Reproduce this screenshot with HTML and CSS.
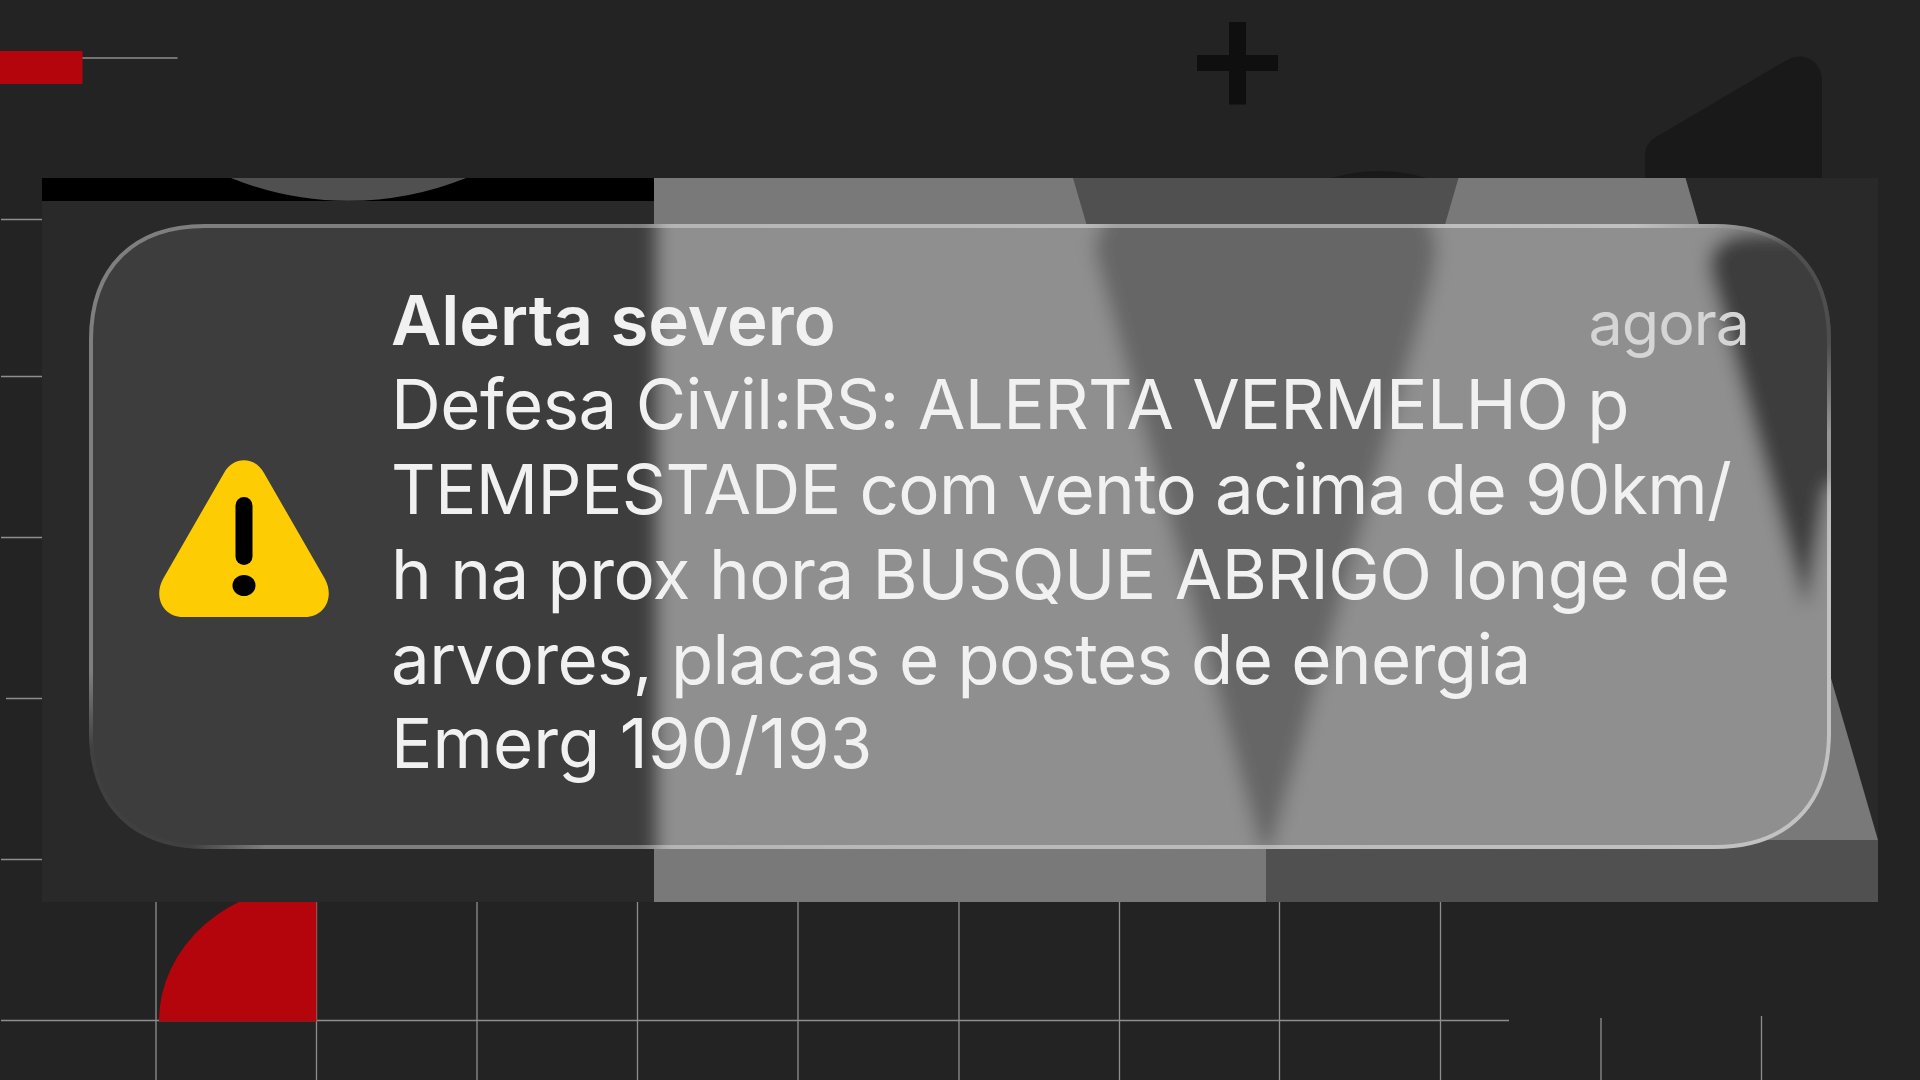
FILE: index.html
```html
<!DOCTYPE html>
<html lang="pt-BR">
<head>
    <meta charset="UTF-8">
    <meta name="viewport" content="width=device-width, initial-scale=1.0">
    <title>Alerta severo</title>
    <link rel="stylesheet" href="styles.css">
</head>
<body>
<main class="tela">
    <svg class="fundo" viewBox="0 0 1920 1080" aria-hidden="true">
        <!-- grade -->
        <g class="linhas">
            <path d="M82 58H177.500M1 219.500H60M1 376.500H60M1 537.500H60M6 698.500H60M1 859.500H60M1 1020.500H1509"/>
            <path d="M156 880V1080M316.500 880V1080M477 880V1080M637.500 880V1080M798 880V1080M959 880V1080M1119.500 880V1080M1279.500 880V1080M1440.500 880V1080M1601 1018V1080M1761.500 1016V1080"/>
        </g>
        <rect class="vermelho" x="0" y="51" width="82.500" height="33"/>
        <path class="vermelho" d="M159 1021.500A157.500 137 0 0 1 316.500 884V1021.500Z"/>

        <!-- formas escuras -->
        <path class="mais" d="M1229 22H1246V55H1278V71H1246V104.500H1229V71H1197V55H1229Z"/>
        <circle class="forma" cx="1379" cy="339" r="168"/>
        <path class="forma" d="M1645 200V155Q1645 143 1656 137L1787 60C1804 50 1822 62 1822 80V200Z"/>

        <!-- painel -->
        <rect class="painel-base" x="42" y="178" width="1836" height="724"/>
        <rect x="42" y="178" width="612" height="23"/>
        <path class="medio" d="M231 178H466A314 314 0 0 1 231 178Z"/>
        <path class="claro" d="M654 178H1685.500L1878 840V902H654Z"/>
        <path class="medio" d="M1073 178H1458.500L1266 840H1878V902H1266V840Z"/>
    </svg>

    <section class="painel">
        <article class="alerta">
            <svg class="vidro" viewBox="0 0 1742 625" aria-hidden="true">
                <defs>
                    <path id="contorno" d="M2 116C2 44 44 2 116 2H1626C1698 2 1740 44 1740 116V509C1740 581 1698 623 1626 623H116C44 623 2 581 2 509Z"/>
                    <clipPath id="corte"><path d="M0 116C0 43 43 0 116 0H1626C1699 0 1742 43 1742 116V509C1742 582 1699 625 1626 625H116C43 625 0 582 0 509Z"/></clipPath>
                    <filter id="desfoque" filterUnits="userSpaceOnUse" x="-60" y="-60" width="1862" height="745"><feGaussianBlur stdDeviation="9"/></filter>
                    <radialGradient id="apaga"><stop offset="0.500" stop-color="#000"/><stop offset="1" stop-color="#000" stop-opacity="0"/></radialGradient>
                    <linearGradient id="borda" x1="0" x2="1"><stop offset="0.300" stop-color="#fff" stop-opacity="0.340"/><stop offset="1" stop-color="#fff" stop-opacity="0.460"/></linearGradient>
                    <mask id="brilho" maskUnits="userSpaceOnUse" x="0" y="0" width="1742" height="625">
                        <rect width="1742" height="625" fill="#fff"/>
                        <circle cx="30" cy="595" r="150" fill="url(#apaga)" opacity="0.950"/>
                        <circle cx="1712" cy="40" r="170" fill="url(#apaga)" opacity="0.800"/>
                    </mask>
                </defs>
                <g clip-path="url(#corte)">
                    <rect class="vidro-escuro" width="1742" height="625"/>
                    <g filter="url(#desfoque)">
                        <rect class="vidro-claro" x="567" y="-50" width="1300" height="750"/>
                        <path class="vidro-medio" d="M1022 -20H1332L1346 10Q1350 28 1342 60L1182 625H1172L1010 44Q1003 24 1008 12Z"/>
                        <path class="vidro-escuro" d="M1622 52Q1612 14 1660 8H1800V250L1738 262L1717 385Z"/>
                    </g>
                </g>
                <use href="#contorno" class="borda" mask="url(#brilho)"/>
            </svg>

            <svg class="icone" viewBox="0 0 170 158" aria-hidden="true">
                <path fill="#fdcc03" d="M65 13C74 -4 96 -4 105 13L166 119C176 138 165 157 146 157H24C5 157 -6 138 4 119Z"/>
                <rect x="76.500" y="37" width="17" height="68" rx="8.500"/>
                <ellipse cx="85" cy="125.500" rx="11.500" ry="10.500"/>
            </svg>

            <div class="conteudo">
                <header class="topo">
                    <h1>Alerta severo</h1>
                    <time>agora</time>
                </header>
                <p class="mensagem">
                    <span class="l1">Defesa Civil:RS: ALERTA VERMELHO p</span>
                    <span class="l2">TEMPESTADE com vento acima de 90km/</span>
                    <span class="l3">h na prox hora BUSQUE ABRIGO longe de</span>
                    <span class="l4">arvores, placas e postes de energia</span>
                    <span class="l5">Emerg 190/193</span>
                </p>
            </div>
        </article>
    </section>
</main>
</body>
</html>
```
FILE: styles.css
```css
* {
    box-sizing: border-box;
    margin: 0;
    padding: 0;
}

body {
    background: #232323;
    font-family: Inter, "Liberation Sans", sans-serif;
    overflow: hidden;
}

.tela {
    position: relative;
    width: 1920px;
    height: 1080px;
    padding: 178px 42px;
}

/* Arte de fundo */
.fundo {
    position: absolute;
    top: 0;
    left: 0;
    width: 1920px;
    height: 1080px;
}

.linhas {
    fill: none;
    stroke: #8e8e8e;
    stroke-width: 1.3;
}

.vermelho { fill: #b4050d; }
.mais { fill: #0f0f0f; }
.forma { fill: #191919; }
.painel-base { fill: #292929; }
.claro { fill: #797979; }
.medio { fill: #505050; }

.painel {
    position: relative;
    height: 724px;
    padding: 45.5px 47px;
}

/* Cartão de vidro */
.alerta {
    position: relative;
    display: flex;
    height: 625px;
    padding: 54px 84px 0 70px;
}

.vidro {
    position: absolute;
    inset: 0;
    width: 100%;
    height: 100%;
}

.vidro-escuro { fill: #3d3d3d; }
.vidro-medio { fill: #666; }
.vidro-claro { fill: #8f8f8f; }

.borda {
    fill: none;
    stroke: url(#borda);
    stroke-width: 4;
}

.icone {
    position: relative;
    flex: none;
    width: 170px;
    height: 158px;
    margin-top: 182px;
}

.conteudo {
    position: relative;
    flex: 1;
    margin-left: 62px;
    color: #f1f1f1;
    font-size: 69px;
    line-height: 84.8px;
    white-space: nowrap;
}

.topo {
    display: flex;
    justify-content: space-between;
    align-items: baseline;
    height: 84.8px;
}

.topo h1 {
    font-size: 69px;
    font-weight: 600;
}

.topo time {
    margin-right: -2px;
    color: #d5d5d5;
    font-size: 61px;
    letter-spacing: -1px;
}

.mensagem span {
    display: block;
}

.l1, .l3 { letter-spacing: -0.52px; }
.l2, .l4 { letter-spacing: -0.61px; }
```
